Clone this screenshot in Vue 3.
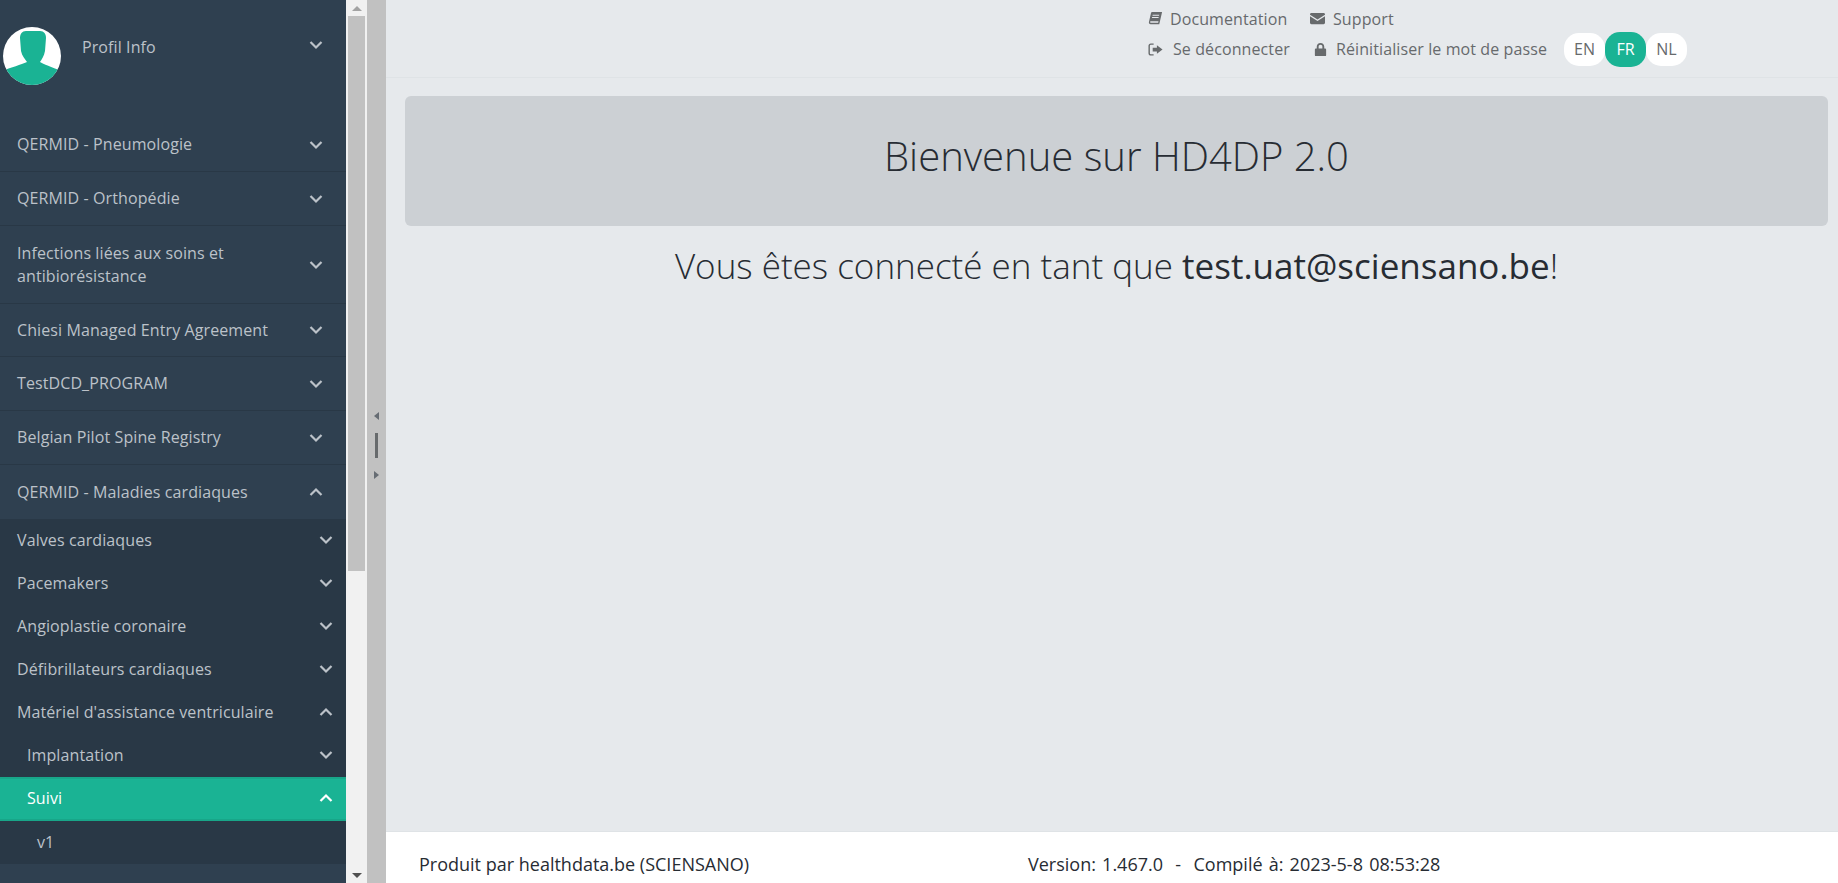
<script setup>
const topMenu = [
  { label: 'QERMID - Pneumologie', h: 54 },
  { label: 'QERMID - Orthopédie', h: 54 },
  { label: 'Infections liées aux soins et antibiorésistance', h: 78 },
  { label: 'Chiesi Managed Entry Agreement', h: 53 },
  { label: 'TestDCD_PROGRAM', h: 54 },
  { label: 'Belgian Pilot Spine Registry', h: 54 }
];

const subMenu = [
  { label: 'Valves cardiaques', open: false },
  { label: 'Pacemakers', open: false },
  { label: 'Angioplastie coronaire', open: false },
  { label: 'Défibrillateurs cardiaques', open: false },
  { label: "Matériel d'assistance ventriculaire", open: true }
];

const langs = ['EN', 'FR', 'NL'];
</script>

<template>
  <div class="page">
    <aside class="sidebar">
      <div class="profile">
        <svg class="avatar" viewBox="0 0 58 58">
          <defs>
            <clipPath id="avatar-clip"><circle cx="29" cy="29" r="29" /></clipPath>
          </defs>
          <g clip-path="url(#avatar-clip)">
            <rect width="58" height="58" fill="#fff" />
            <path d="M23 4h14c4 0 6 3 6 7l-1 13c-1 5-3 8-5 11 3 2 12 5 21 9v14H0V44c8-4 18-6 24-9-2-3-5-6-6-11l-1-13c0-4 2-7 6-7z" fill="#1ab394" />
          </g>
        </svg>
        <span class="profile-name">Profil Info</span>
        <svg class="chev" viewBox="0 0 14 10"><path d="M1.5 2 7 7.5 12.500 2" /></svg>
      </div>

      <div
        v-for="item in topMenu"
        :key="item.label"
        class="menu-item"
        :style="{ height: item.h + 'px' }"
      >
        <span class="menu-label">{{ item.label }}</span>
        <svg class="chev" viewBox="0 0 14 10"><path d="M1.5 2 7 7.5 12.500 2" /></svg>
      </div>

      <div class="menu-item open">
        <span class="menu-label">QERMID - Maladies cardiaques</span>
        <svg class="chev" viewBox="0 0 14 10"><path d="M1.500 8 7 2.500 12.500 8" /></svg>
      </div>

      <div class="submenu">
        <div v-for="sub in subMenu" :key="sub.label" class="sub-item">
          <span>{{ sub.label }}</span>
          <svg class="chev" viewBox="0 0 14 10">
            <path :d="sub.open ? 'M1.500 8 7 2.500 12.500 8' : 'M1.500 2 7 7.500 12.500 2'" />
          </svg>
        </div>
        <div class="sub-item level2">
          <span>Implantation</span>
          <svg class="chev" viewBox="0 0 14 10"><path d="M1.500 2 7 7.500 12.500 2" /></svg>
        </div>
        <div class="sub-item level2 active">
          <span>Suivi</span>
          <svg class="chev" viewBox="0 0 14 10"><path d="M1.500 8 7 2.500 12.500 8" /></svg>
        </div>
        <div class="sub-item level3"><span>v1</span></div>
      </div>
    </aside>

    <div class="scrollbar">
      <div class="scroll-btn"><i class="arrow-up"></i></div>
      <div class="scroll-track"><div class="scroll-thumb"></div></div>
      <div class="scroll-btn"><i class="arrow-down"></i></div>
    </div>

    <div class="splitter">
      <i class="arrow-left"></i>
      <div class="grip"></div>
      <i class="arrow-right"></i>
    </div>

    <main class="main">
      <header class="topbar">
        <div class="links">
          <div class="link-row">
            <a class="link doc">
              <svg class="ico" viewBox="0 0 16 16"><path d="M4.500 1H15l-.4 2-2.600 11H2.800C1.500 14 .7 13 1 11.600L3.200 2.200C3.400 1.500 3.900 1 4.500 1zM5 4l-.2 1h7l.2-1zM4.400 6.400l-.2 1h7l.2-1zM3 11c-.6 0-.8.400-.8.800s.3.800.8.800h7.800l.4-1.600z" fill-rule="evenodd" /></svg>
              Documentation
            </a>
            <a class="link support">
              <svg class="ico" viewBox="0 0 16 16"><path d="M1.500 2h13c.8 0 1.500.7 1.500 1.500v.4L8 9 0 3.900v-.4C0 2.700.7 2 1.500 2zM0 5.700l8 5 8-5v6.800c0 .8-.7 1.500-1.500 1.500h-13C.7 14 0 13.300 0 12.500z" /></svg>
              Support
            </a>
          </div>
          <div class="link-row second">
            <a class="link logout">
              <svg class="ico" viewBox="0 0 16 16"><path d="M6 1.500v1.500H3c-.6 0-1 .4-1 1v8c0 .6.400 1 1 1h3v1.500H3c-1.500 0-2.500-1-2.500-2.500V4c0-1.500 1-2.500 2.500-2.500zM9.500 3.500 15.500 8l-6 4.500V10H5V6h4.500z" /></svg>
              Se déconnecter
            </a>
            <a class="link reset">
              <svg class="ico lock" viewBox="0 0 16 16"><path d="M8 1c2.400 0 4 1.700 4 4v2h1c.6 0 1 .4 1 1v6c0 .6-.4 1-1 1H3c-.6 0-1-.4-1-1V8c0-.6.4-1 1-1h1V5c0-2.300 1.600-4 4-4zm0 2C6.800 3 6 3.800 6 5v2h4V5c0-1.200-.8-2-2-2z" fill-rule="evenodd" /></svg>
              Réinitialiser le mot de passe
            </a>
            <div class="langs">
              <span v-for="l in langs" :key="l" class="lang" :class="{ current: l === 'FR' }">{{ l }}</span>
            </div>
          </div>
        </div>
      </header>

      <section class="content">
        <div class="jumbo">Bienvenue sur HD4DP 2.0</div>
        <p class="logged">Vous êtes connecté en tant que <strong>test.uat@sciensano.be</strong>!</p>
      </section>

      <footer class="footer">
        <span class="produced">Produit par healthdata.be (SCIENSANO)</span>
        <span class="version">Version: 1.467.0 &nbsp;-&nbsp; Compilé à: 2023-5-8 08:53:28</span>
      </footer>
    </main>
  </div>
</template>

<style>
html, body {
  margin: 0;
  overflow: hidden;
}
</style>

<style scoped>
.page {
  display: flex;
  width: 1838px;
  height: 883px;
  overflow: hidden;
  font-family: "Open Sans", "Liberation Sans", sans-serif;
  font-size: 16px;
}

.sidebar {
  width: 346px;
  flex-shrink: 0;
  background: #2f4050;
  color: #bcc2c9;
  overflow: hidden;
  letter-spacing: 0.1px;
}

.profile {
  display: flex;
  align-items: flex-start;
  height: 118px;
  box-sizing: border-box;
  padding: 27px 23px 0 3px;
}

.avatar {
  width: 58px;
  height: 58px;
  flex-shrink: 0;
}

.profile-name {
  flex: 1;
  margin: 10px 0 0 21px;
  line-height: 20px;
}

.profile .chev {
  margin-top: 13px;
}

.chev {
  width: 14px;
  height: 10px;
  flex-shrink: 0;
}

.chev path {
  fill: none;
  stroke: currentColor;
  stroke-width: 2.200;
}

.menu-item {
  display: flex;
  align-items: center;
  height: 54px;
  box-sizing: border-box;
  padding: 0 23px 0 17px;
  border-bottom: 1px solid #293846;
  line-height: 23px;
}

.menu-item.open {
  border-bottom: 0;
}

.menu-label {
  flex: 1;
  padding-right: 40px;
}

.submenu {
  background: #293846;
}

.sub-item {
  display: flex;
  align-items: center;
  justify-content: space-between;
  height: 43px;
  box-sizing: border-box;
  padding: 0 13px 2px 17px;
}

.level2 {
  padding-left: 27px;
}

.level3 {
  padding-left: 37px;
}

.active {
  background: #1ab394;
  color: #fff;
  height: 44px;
  border: 2px solid #18a689;
  border-width: 2px 0;
}

.scrollbar {
  display: flex;
  flex-direction: column;
  width: 21px;
  flex-shrink: 0;
  background: #f1f1f1;
}

.scroll-btn {
  display: flex;
  align-items: center;
  justify-content: center;
  height: 16px;
  background: #f1f1f1;
}

.arrow-up {
  border: 5px solid transparent;
  border-top: 0;
  border-bottom: 5px solid #a3a3a3;
}

.arrow-down {
  border: 5px solid transparent;
  border-bottom: 0;
  border-top: 5px solid #505050;
}

.scroll-track {
  flex: 1;
  padding: 0 2px;
}

.scroll-thumb {
  height: 555px;
  background: #c1c1c1;
}

.splitter {
  display: flex;
  flex-direction: column;
  align-items: center;
  justify-content: center;
  gap: 13px;
  width: 19px;
  flex-shrink: 0;
  padding-top: 8px;
  box-sizing: border-box;
  background: #c1c1c1;
}

.arrow-left {
  border: 4px solid transparent;
  border-left: 0;
  border-right: 5px solid #666c73;
}

.arrow-right {
  border: 4px solid transparent;
  border-right: 0;
  border-left: 5px solid #666c73;
}

.grip {
  width: 3px;
  height: 25px;
  background: #676a6c;
}

.main {
  flex: 1;
  display: flex;
  flex-direction: column;
  min-width: 0;
  background: #e6e9ec;
}

.topbar {
  height: 78px;
  box-sizing: border-box;
  padding-left: 762px;
  border-bottom: 1px solid #dfe3e6;
  color: #676a6c;
}

.link-row {
  display: flex;
  align-items: center;
  height: 19px;
  margin-top: 9px;
}

.link-row.second {
  height: 36px;
  margin-top: 3px;
}

.link {
  display: flex;
  align-items: center;
  font-size: 16px;
  letter-spacing: 0.1px;
  white-space: nowrap;
}

.ico {
  width: 15px;
  height: 15px;
  margin-right: 7px;
  fill: #676a6c;
}

.doc {
  width: 162px;
}

.support .ico {
  margin-right: 8px;
}

.logout {
  width: 165px;
}

.logout .ico {
  margin-right: 10px;
}

.reset .ico {
  margin-right: 8px;
}

.langs {
  display: flex;
  align-items: center;
  margin-left: 17px;
}

.lang {
  display: flex;
  align-items: center;
  justify-content: center;
  width: 41px;
  height: 33px;
  background: #fff;
  border-radius: 15px;
}

.lang.current {
  height: 35px;
  background: #1ab394;
  color: #fff;
}

.content {
  flex: 1;
  padding: 18px 10px 0 19px;
  color: #272c33;
}

.jumbo {
  display: flex;
  align-items: center;
  justify-content: center;
  height: 130px;
  padding-bottom: 12px;
  box-sizing: border-box;
  background: #ccd0d4;
  border-radius: 6px;
  font-size: 40px;
  font-weight: 300;
}

.logged {
  margin: 17px 0 0;
  text-align: center;
  font-size: 35px;
  font-weight: 300;
  line-height: 45px;
}

.logged strong {
  font-weight: 400;
}

.footer {
  display: flex;
  height: 52px;
  box-sizing: border-box;
  padding: 17px 0 0 33px;
  background: #fff;
  border-top: 1px solid #dfe3e6;
  color: #272c33;
  line-height: 30px;
  font-size: 18px;
}

.produced {
  width: 609px;
}

.version {
  word-spacing: 1.500px;
}
</style>
